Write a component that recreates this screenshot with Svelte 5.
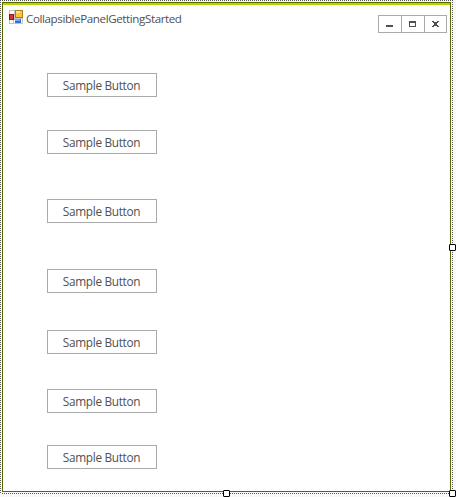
<script>
  const gaps = [0, 33, 45, 46, 37, 35, 32];
  const handles = ['right', 'bottom', 'corner'];
</script>

<div class="designer">
  <div class="window">
    <header>
      <svg class="app" width="14" height="14" viewBox="0 0 14 14" shape-rendering="crispEdges">
        <rect width="14" height="14" fill="#c3c3c3" />
        <path fill="#fff" d="M1 1h4v3H1zM1 10h3v3H1zM5 10h1v3H5z" />
        <rect x="0" y="4" width="5" height="6" fill="#9c1010" />
        <rect x="1" y="5" width="3" height="4" fill="#d43a2a" />
        <rect x="6" y="0" width="8" height="8" fill="#b17c13" />
        <rect x="7" y="1" width="6" height="6" fill="#f8c63d" />
        <rect x="7" y="1" width="4" height="2" fill="#ffe58b" />
        <rect x="6" y="9" width="6" height="4" fill="#356bd2" />
        <rect x="6" y="9" width="5" height="2" fill="#79a8f5" />
        <rect x="12" y="9" width="1" height="4" fill="#fff" />
      </svg>
      <span class="title">CollapsiblePanelGettingStarted</span>
      <div class="controls">
        <button aria-label="Minimize"><svg width="22" height="16" shape-rendering="crispEdges"><rect x="7" y="9" width="7" height="2" fill="#505050" /></svg></button>
        <button aria-label="Maximize"><svg width="22" height="16" shape-rendering="crispEdges"><path fill="#505050" fill-rule="evenodd" d="M7 5h7v6H7zM8 7v3h5V7z" /></svg></button>
        <button aria-label="Close"><svg width="21" height="16" shape-rendering="crispEdges"><path fill="#505050" d="M7 5h2v1h3V5h2v1h-1v1h-1v2h1v1h1v1h-2v-1H9v1H7v-1h1V9h1V7H8V6H7z" /><path fill="#fff" d="M10 5h1v1h-1zM10 10h1v1h-1z" /></svg></button>
      </div>
    </header>
    <main>
      {#each gaps as gap}
        <button class="sample" style="margin-top:{gap}px"><span>Sample Button</span></button>
      {/each}
    </main>
  </div>
  <i class="dots top"></i><i class="dots base"></i><i class="dots left"></i><i class="dots side"></i>
  {#each handles as place}<i class="handle {place}"></i>{/each}
</div>

<style>
  .designer { position: relative; width: 456px; height: 497px; padding: 2px; box-sizing: border-box; overflow: hidden; background: #f8f8f8; font-family: "Open Sans", "Noto Sans", sans-serif; }
  .window { width: 449px; height: 490px; box-sizing: border-box; background: #fff; border: 1px solid #546a00; }
  header { height: 70px; box-sizing: border-box; border-top: 2px solid #b2d400; display: flex; align-items: flex-start; padding: 5px 3px 0 6px; }
  .app { display: block; flex: none; }
  .title { margin: 0 0 0 3px; font-size: 11.6px; line-height: 18px; color: #505050; letter-spacing: -0.4px; white-space: nowrap; }
  .controls { display: flex; margin: 5px 0 0 auto; }
  .controls button { width: 24px; height: 18px; box-sizing: border-box; padding: 0; border: 1px solid #aaa; background: #fff; }
  .controls button + button { margin-left: -1px; }
  .controls button:last-child { width: 23px; }
  .controls svg { display: block; }
  main { display: flex; flex-direction: column; padding-left: 44px; }
  .sample { flex: none; width: 110px; height: 24px; box-sizing: border-box; border: 1px solid #aaa; border-radius: 0; background: #fff; padding: 0 1px 0 0; font: 11.8px/20px "Open Sans", "Noto Sans", sans-serif; color: #505050; text-align: center; letter-spacing: -0.3px; }
  .sample span { display: block; }
  .dots { position: absolute; }
  .top, .base { left: 0; width: 453px; height: 1px; background: repeating-linear-gradient(90deg, #555 0 1px, #fff 1px 2px); }
  .top { top: 0; }
  .base { top: 493px; }
  .left, .side { top: 0; width: 1px; height: 494px; background: repeating-linear-gradient(#555 0 1px, #fff 1px 2px); }
  .left { left: 0; }
  .side { left: 452px; }
  .handle { position: absolute; width: 7px; height: 7px; box-sizing: border-box; border: 1px solid #000; border-radius: 1px; background: #fff; }
  .right { left: 449px; top: 244px; }
  .bottom { left: 223px; top: 490px; }
  .corner { left: 449px; top: 490px; }
</style>
